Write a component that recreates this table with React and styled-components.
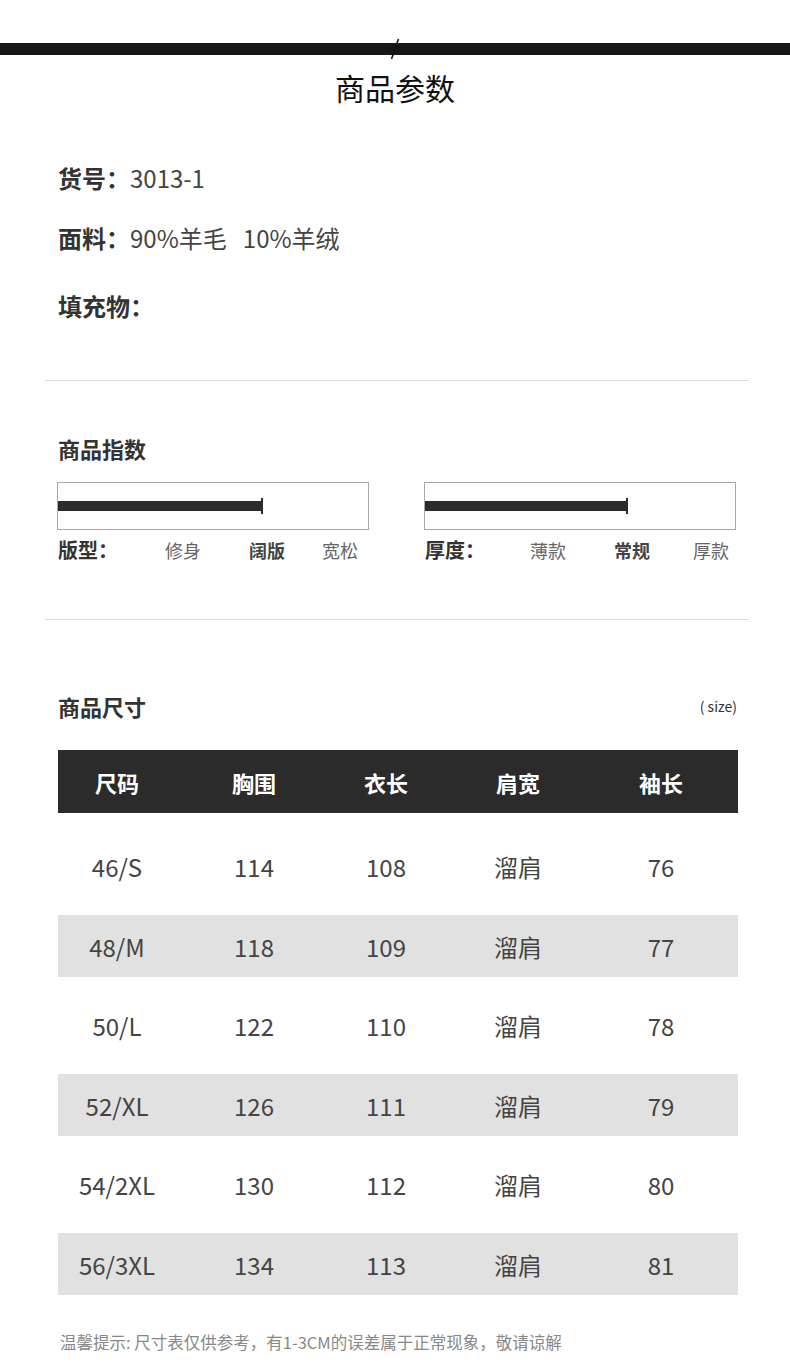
import React from 'react';
import styled, { createGlobalStyle } from 'styled-components';

const GlobalStyle = createGlobalStyle`
  body {
    margin: 0;
    background: #fff;
    font-family: "Noto Sans CJK SC", "Noto Sans", sans-serif;
  }
`;

const infos = [
  { label: '货号：', value: '3013-1', gap: 0 },
  { label: '面料：', value: '90%羊毛   10%羊绒', gap: 28 },
  { label: '填充物：', value: '', gap: 36 },
];

const indexes = [
  { label: '版型：', options: ['修身', '阔版', '宽松'], active: 1, fill: 204, cols: '107px 84px 73px auto' },
  { label: '厚度：', options: ['薄款', '常规', '厚款'], active: 1, fill: 202, cols: '105px 84px 79px auto' },
];

const heads = ['尺码', '胸围', '衣长', '肩宽', '袖长'];

const rows = [
  ['46/S', '114', '108', '溜肩', '76'],
  ['48/M', '118', '109', '溜肩', '77'],
  ['50/L', '122', '110', '溜肩', '78'],
  ['52/XL', '126', '111', '溜肩', '79'],
  ['54/2XL', '130', '112', '溜肩', '80'],
  ['56/3XL', '134', '113', '溜肩', '81'],
];

const App = () => {
  return (
    <>
      <GlobalStyle />
      <Page>
        <TopBar>
          <Slash width="10" height="22" viewBox="0 0 10 22">
            <line x1="8.5" y1="1" x2="1.5" y2="21" stroke="#111" strokeWidth="1.6" />
          </Slash>
        </TopBar>
        <Title>商品参数</Title>

        <InfoList>
          {infos.map((item) => (
            <InfoLine key={item.label} gap={item.gap}>
              <b>{item.label}</b>
              <span>{item.value}</span>
            </InfoLine>
          ))}
        </InfoList>

        <Divider top={58} />

        <IndexTitle>商品指数</IndexTitle>
        <IndexRow>
          {indexes.map((idx) => (
            <IndexBlock key={idx.label}>
              <Track>
                <Fill style={{ width: idx.fill }} />
              </Track>
              <Scale cols={idx.cols}>
                <ScaleLabel>{idx.label}</ScaleLabel>
                {idx.options.map((opt, i) => (
                  <ScaleOption key={opt} active={i === idx.active}>{opt}</ScaleOption>
                ))}
              </Scale>
            </IndexBlock>
          ))}
        </IndexRow>

        <Divider top={57} />

        <SizeHead>
          <SectionTitle>商品尺寸</SectionTitle>
          <SizeNote>( size)</SizeNote>
        </SizeHead>

        <Table>
          <HeadRow>
            {heads.map((h) => (
              <Cell key={h}>{h}</Cell>
            ))}
          </HeadRow>
          {rows.map((r, i) => (
            <BodyRow key={r[0]} striped={i % 2 === 1}>
              {r.map((c, j) => (
                <Cell key={j}>{c}</Cell>
              ))}
            </BodyRow>
          ))}
        </Table>

        <Tip>温馨提示: 尺寸表仅供参考，有1-3CM的误差属于正常现象，敬请谅解</Tip>
      </Page>
    </>
  );
};

export default App;

const Page = styled.div`
  width: 790px;
  height: 1364px;
  padding-top: 43px;
  box-sizing: border-box;
  overflow: hidden;
  color: #333;
`;

const TopBar = styled.div`
  position: relative;
  height: 12px;
  background: #161616;
`;

const Slash = styled.svg`
  position: absolute;
  left: 390px;
  top: -5px;
  display: block;
`;

const Title = styled.h1`
  margin: 12px 0 0;
  text-align: center;
  font-size: 30px;
  line-height: 40px;
  font-weight: 400;
  color: #111;
`;

const InfoList = styled.div`
  padding: 55px 58px 0;
`;

const InfoLine = styled.div`
  margin-top: ${(p) => p.gap}px;
  font-size: 24px;
  line-height: 32px;
  color: #333;
  white-space: pre;

  b {
    font-weight: 700;
  }

  span {
    color: #444;
  }
`;

const Divider = styled.div`
  height: 1px;
  margin: ${(p) => p.top}px 41px 0 45px;
  background: #dcdcdc;
`;

const SectionTitle = styled.h2`
  margin: 0;
  font-size: 22px;
  line-height: 30px;
  font-weight: 700;
  color: #333;
`;

const IndexTitle = styled(SectionTitle)`
  margin: 52px 0 0 58px;
`;

const IndexRow = styled.div`
  display: flex;
  gap: 55px;
  padding: 19px 0 0 57px;
`;

const IndexBlock = styled.div`
  width: 312px;
`;

const Track = styled.div`
  height: 46px;
  border: 1px solid #a8a8a8;
  display: flex;
  align-items: center;
`;

const Fill = styled.div`
  position: relative;
  height: 10px;
  background: #2b2b2b;

  &::after {
    content: '';
    position: absolute;
    right: -1px;
    top: -3px;
    width: 2px;
    height: 16px;
    background: #2b2b2b;
  }
`;

const Scale = styled.div`
  display: grid;
  grid-template-columns: ${(p) => p.cols};
  align-items: center;
  margin-top: 8px;
  padding-left: 1px;
  height: 24px;
  line-height: 24px;
`;

const ScaleLabel = styled.span`
  font-size: 20px;
  font-weight: 700;
  color: #333;
`;

const ScaleOption = styled.span`
  font-size: 18px;
  font-weight: ${(p) => (p.active ? 700 : 400)};
  color: ${(p) => (p.active ? '#444' : '#666')};
`;

const SizeHead = styled.div`
  display: flex;
  align-items: center;
  justify-content: space-between;
  margin-top: 71px;
  padding: 0 53px 0 58px;
`;

const SizeNote = styled.span`
  font-size: 14px;
  color: #333;
`;

const Table = styled.div`
  display: flex;
  flex-direction: column;
  gap: 17.5px;
  width: 680px;
  margin: 29px 0 0 58px;
`;

const Row = styled.div`
  display: grid;
  grid-template-columns: 118px 156px 108px 156px 130px;
  align-items: center;
`;

const HeadRow = styled(Row)`
  height: 63px;
  margin-bottom: 5px;
  background: #2b2b2b;
  color: #fff;
  font-size: 22px;
  font-weight: 700;
`;

const BodyRow = styled(Row)`
  height: 62px;
  background: ${(p) => (p.striped ? '#e1e1e1' : 'transparent')};
  color: #444;
  font-size: 24px;
`;

const Cell = styled.div`
  text-align: center;
  white-space: nowrap;
`;

const Tip = styled.p`
  margin: 36px 0 0 60px;
  font-size: 16.5px;
  line-height: 22px;
  color: #888;
`;
